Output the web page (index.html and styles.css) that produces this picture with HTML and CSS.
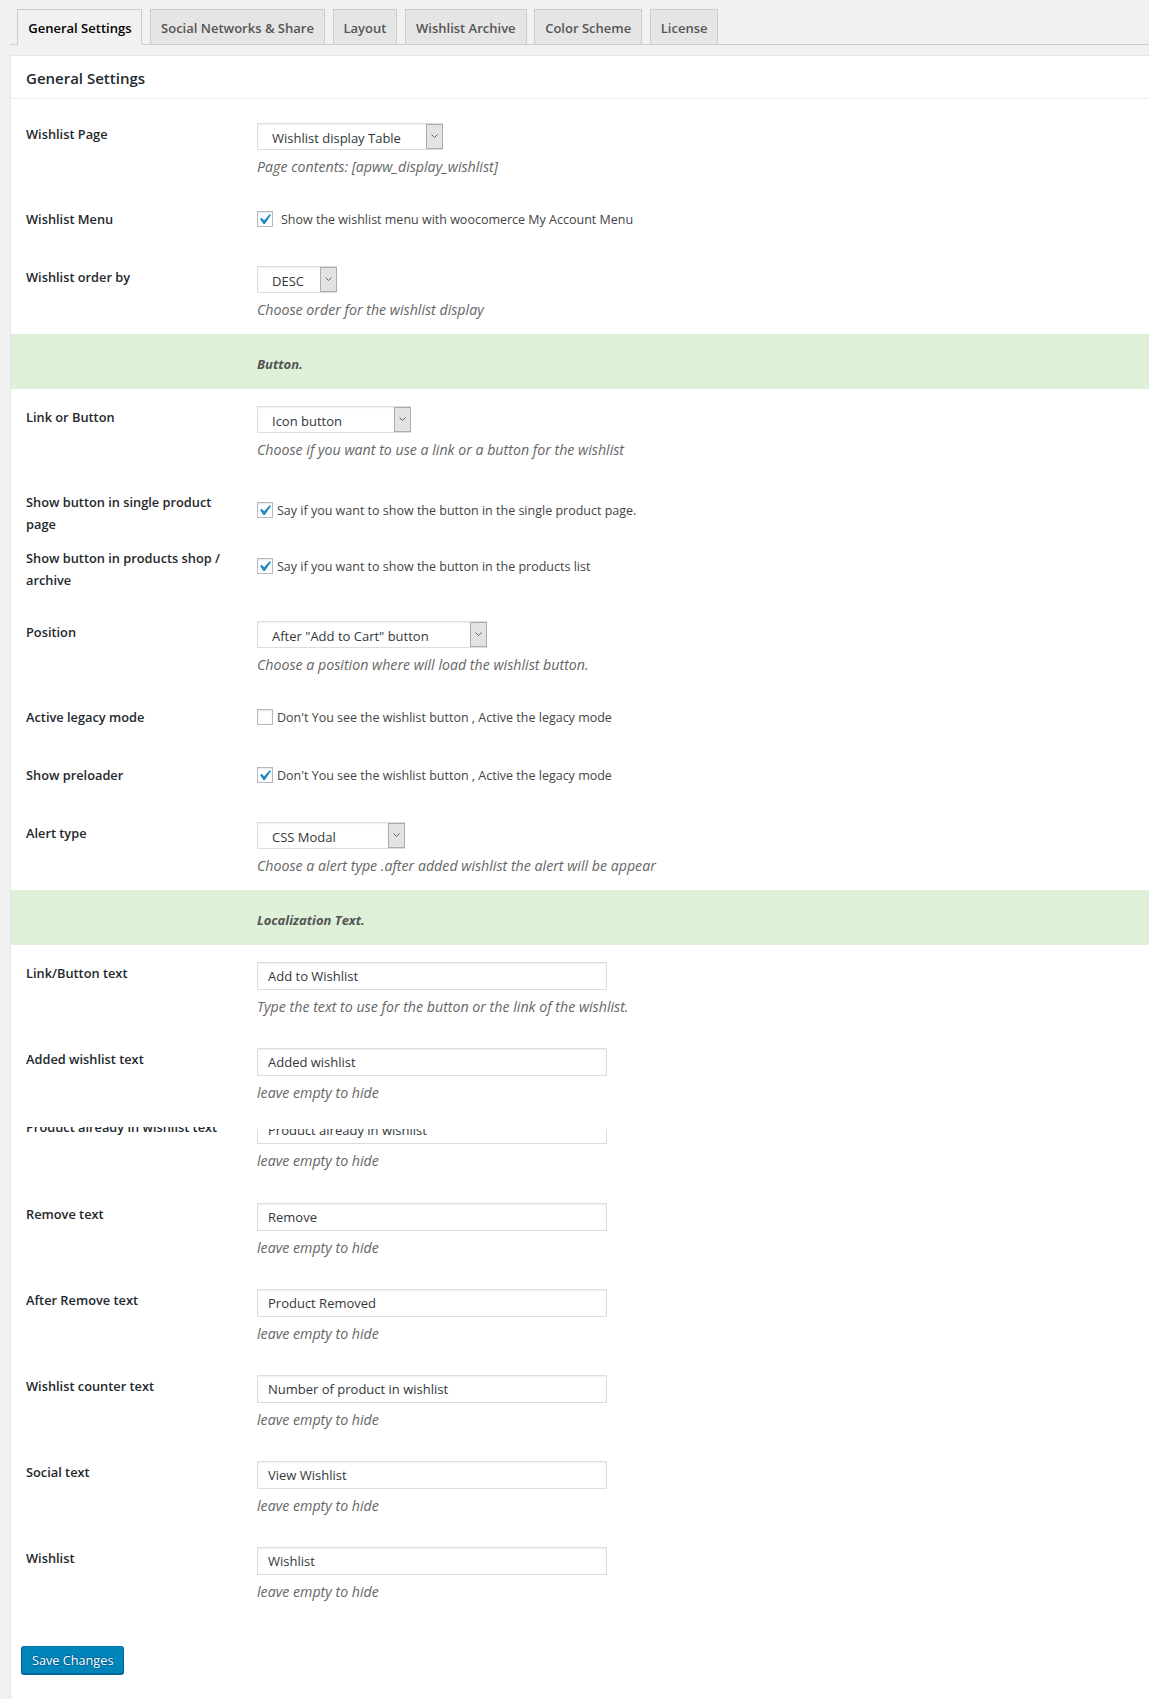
FILE: index.html
```html
<!DOCTYPE html>
<html lang="en">
<head>
<meta charset="utf-8">
<title>General Settings</title>
<link rel="stylesheet" href="styles.css">
</head>
<body>
<div class="wrap">
  <nav class="tabs">
    <a class="tab tab-active">General Settings</a>
    <a class="tab">Social Networks &amp; Share</a>
    <a class="tab">Layout</a>
    <a class="tab">Wishlist Archive</a>
    <a class="tab">Color Scheme</a>
    <a class="tab">License</a>
  </nav>

  <div class="panel">
    <h2 class="panel-title">General Settings</h2>

    <div class="form">
      <div class="row">
        <div class="row-label">Wishlist Page</div>
        <div class="row-field">
          <div class="select w-table"><span class="select-value">Wishlist display Table</span><span class="select-arrow"><svg width="7" height="4" viewBox="0 0 7 4"><polyline points="0.5,0.5 3.5,3.5 6.5,0.5" fill="none" stroke="#606060" stroke-width="1"/></svg></span></div>
          <p class="desc">Page contents: [apww_display_wishlist]</p>
        </div>
      </div>

      <div class="row row-check">
        <div class="row-label">Wishlist Menu</div>
        <div class="row-field">
          <div class="check"><span class="cb"><svg class="tick" width="21" height="21" viewBox="0 0 20 20"><path d="M14.83 4.89l1.34.94-5.81 8.38H9.02L5.78 9.67l1.34-1.25 2.57 2.4z" fill="#1e8cbe"/></svg></span><span class="check-text spaced">Show the wishlist menu with woocomerce My Account Menu</span></div>
        </div>
      </div>

      <div class="row">
        <div class="row-label">Wishlist order by</div>
        <div class="row-field">
          <div class="select w-desc"><span class="select-value">DESC</span><span class="select-arrow"><svg width="7" height="4" viewBox="0 0 7 4"><polyline points="0.5,0.5 3.5,3.5 6.5,0.5" fill="none" stroke="#606060" stroke-width="1"/></svg></span></div>
          <p class="desc">Choose order for the wishlist display</p>
        </div>
      </div>

      <div class="band">
        <div></div>
        <div class="band-text">Button.</div>
      </div>

      <div class="row">
        <div class="row-label">Link or Button</div>
        <div class="row-field">
          <div class="select w-icon"><span class="select-value">Icon button</span><span class="select-arrow"><svg width="7" height="4" viewBox="0 0 7 4"><polyline points="0.5,0.5 3.5,3.5 6.5,0.5" fill="none" stroke="#606060" stroke-width="1"/></svg></span></div>
          <p class="desc">Choose if you want to use a link or a button for the wishlist</p>
        </div>
      </div>

      <div class="row row-check2 h-56">
        <div class="row-label">Show button in single product page</div>
        <div class="row-field">
          <div class="check"><span class="cb"><svg class="tick" width="21" height="21" viewBox="0 0 20 20"><path d="M14.83 4.89l1.34.94-5.81 8.38H9.02L5.78 9.67l1.34-1.25 2.57 2.4z" fill="#1e8cbe"/></svg></span><span class="check-text">Say if you want to show the button in the single product page.</span></div>
        </div>
      </div>

      <div class="row row-check2 h-74">
        <div class="row-label">Show button in products shop / archive</div>
        <div class="row-field">
          <div class="check"><span class="cb"><svg class="tick" width="21" height="21" viewBox="0 0 20 20"><path d="M14.83 4.89l1.34.94-5.81 8.38H9.02L5.78 9.67l1.34-1.25 2.57 2.4z" fill="#1e8cbe"/></svg></span><span class="check-text">Say if you want to show the button in the products list</span></div>
        </div>
      </div>

      <div class="row">
        <div class="row-label">Position</div>
        <div class="row-field">
          <div class="select w-after"><span class="select-value">After "Add to Cart" button</span><span class="select-arrow"><svg width="7" height="4" viewBox="0 0 7 4"><polyline points="0.5,0.5 3.5,3.5 6.5,0.5" fill="none" stroke="#606060" stroke-width="1"/></svg></span></div>
          <p class="desc">Choose a position where will load the wishlist button.</p>
        </div>
      </div>

      <div class="row row-check">
        <div class="row-label">Active legacy mode</div>
        <div class="row-field">
          <div class="check"><span class="cb"></span><span class="check-text">Don't You see the wishlist button , Active the legacy mode</span></div>
        </div>
      </div>

      <div class="row row-check">
        <div class="row-label">Show preloader</div>
        <div class="row-field">
          <div class="check"><span class="cb"><svg class="tick" width="21" height="21" viewBox="0 0 20 20"><path d="M14.83 4.89l1.34.94-5.81 8.38H9.02L5.78 9.67l1.34-1.25 2.57 2.4z" fill="#1e8cbe"/></svg></span><span class="check-text">Don't You see the wishlist button , Active the legacy mode</span></div>
        </div>
      </div>

      <div class="row">
        <div class="row-label">Alert type</div>
        <div class="row-field">
          <div class="select w-css"><span class="select-value">CSS Modal</span><span class="select-arrow"><svg width="7" height="4" viewBox="0 0 7 4"><polyline points="0.5,0.5 3.5,3.5 6.5,0.5" fill="none" stroke="#606060" stroke-width="1"/></svg></span></div>
          <p class="desc">Choose a alert type .after added wishlist the alert will be appear</p>
        </div>
      </div>

      <div class="band">
        <div></div>
        <div class="band-text">Localization Text.</div>
      </div>

      <div class="row row-input">
        <div class="row-label">Link/Button text</div>
        <div class="row-field">
          <div class="text-input">Add to Wishlist</div>
          <p class="desc">Type the text to use for the button or the link of the wishlist.</p>
        </div>
      </div>

      <div class="row row-input">
        <div class="row-label">Added wishlist text</div>
        <div class="row-field">
          <div class="text-input">Added wishlist</div>
          <p class="desc">leave empty to hide</p>
        </div>
      </div>

      <div class="row-clip">
        <div class="row row-input">
          <div class="row-label">Product already in wishlist text</div>
          <div class="row-field">
            <div class="text-input">Product already in wishlist</div>
            <p class="desc">leave empty to hide</p>
          </div>
        </div>
      </div>

      <div class="row row-input">
        <div class="row-label">Remove text</div>
        <div class="row-field">
          <div class="text-input">Remove</div>
          <p class="desc">leave empty to hide</p>
        </div>
      </div>

      <div class="row row-input">
        <div class="row-label">After Remove text</div>
        <div class="row-field">
          <div class="text-input">Product Removed</div>
          <p class="desc">leave empty to hide</p>
        </div>
      </div>

      <div class="row row-input">
        <div class="row-label">Wishlist counter text</div>
        <div class="row-field">
          <div class="text-input">Number of product in wishlist</div>
          <p class="desc">leave empty to hide</p>
        </div>
      </div>

      <div class="row row-input">
        <div class="row-label">Social text</div>
        <div class="row-field">
          <div class="text-input">View Wishlist</div>
          <p class="desc">leave empty to hide</p>
        </div>
      </div>

      <div class="row row-input">
        <div class="row-label">Wishlist</div>
        <div class="row-field">
          <div class="text-input">Wishlist</div>
          <p class="desc">leave empty to hide</p>
        </div>
      </div>
    </div>

    <div class="submit">
      <button class="btn-primary" type="button">Save Changes</button>
    </div>
  </div>
</div>
</body>
</html>
```

FILE: styles.css
```css
html, body {
  margin: 0;
  padding: 0;
}

body {
  background: #f1f1f1;
  font-family: "Open Sans", "Noto Sans", "DejaVu Sans", sans-serif;
  font-size: 13px;
  color: #444;
}

.wrap {
  padding: 9px 0 0 10px;
}

/* Tabs */
.tabs {
  display: flex;
  align-items: flex-end;
  gap: 7.6px;
  padding-left: 7.3px;
  border-bottom: 1px solid #ccc;
}

.tab {
  display: block;
  padding: 6px 10px 4px;
  border: 1px solid #ccc;
  border-bottom: none;
  background: #e5e5e5;
  color: #555;
  font-weight: 600;
  font-size: 13px;
  line-height: 24px;
  white-space: nowrap;
  text-decoration: none;
}

.tab-active {
  background: #f1f1f1;
  color: #000;
  border-bottom: 1px solid #f1f1f1;
  margin-bottom: -1px;
}

/* Panel */
.panel {
  margin-top: 10px;
  background: #fff;
  border-top: 1px solid #e5e5e5;
  border-left: 1px solid #e5e5e5;
  min-height: calc(100vh - 55px);
  box-sizing: border-box;
}

.panel-title {
  margin: 0;
  padding: 11px 15px 9px;
  font-size: 15px;
  font-weight: 600;
  line-height: 22px;
  color: #23282d;
  border-bottom: 1px solid #eee;
}

.form {
  margin-top: 7px;
}

/* Rows */
.row {
  display: grid;
  grid-template-columns: 231px 1fr;
  padding-left: 15px;
}

.row-label {
  width: 200px;
  padding-top: 17px;
  line-height: 22px;
  font-size: 12.8px;
  font-weight: 600;
  color: #23282d;
}

.row-field {
  padding: 17px 0 13px;
}

.row-input .row-field {
  padding-bottom: 13px;
}

.row-check .row-field {
  padding: 20px 0 22px;
}

.row-check2 .row-field {
  padding: 28px 0 0;
}

.h-56 {
  height: 56px;
}

.h-74 {
  height: 74px;
}

.row-clip {
  margin-top: 10px;
  height: 59px;
  overflow: hidden;
}

.row-clip .row {
  margin-top: -28px;
}

.row-clip .row-field {
  clip-path: inset(30px 0 0 0);
}

/* Band */
.band {
  display: grid;
  grid-template-columns: 246px 1fr;
  height: 55px;
  background: #dff0d8;
}

.band-text {
  padding-top: 19px;
  line-height: 22px;
  font-weight: 700;
  font-style: italic;
  color: #555;
}

/* Select */
.select {
  display: flex;
  height: 27px;
  box-sizing: border-box;
  border: 1px solid #ddd;
  border-right: none;
  background: #fff;
  box-shadow: inset 0 1px 2px rgba(0, 0, 0, 0.07);
  color: #32373c;
}

.select-value {
  flex: 1;
  padding-left: 14px;
  padding-top: 4px;
  line-height: 21px;
  white-space: nowrap;
}

.select-arrow {
  width: 17px;
  box-sizing: border-box;
  border: 1px solid #acacac;
  background: #e3e3e3;
  display: flex;
  align-items: center;
  justify-content: center;
}

.select-arrow svg {
  display: block;
  margin-bottom: 2px;
}

.w-table { width: 186px; }
.w-desc { width: 80px; }
.w-icon { width: 154px; }
.w-after { width: 230px; }
.w-css { width: 148px; }

/* Text input */
.text-input {
  width: 350px;
  height: 28px;
  box-sizing: border-box;
  border: 1px solid #ddd;
  box-shadow: inset 0 1px 2px rgba(0, 0, 0, 0.07);
  padding: 0 10px;
  line-height: 27px;
  color: #32373c;
  background: #fff;
  white-space: nowrap;
}

.desc {
  margin: 6px 0 0;
  line-height: 22px;
  font-size: 14.2px;
  font-style: italic;
  color: #666;
  white-space: nowrap;
}

/* Checkbox */
.check {
  display: flex;
  align-items: center;
  height: 16px;
}

.cb {
  display: block;
  flex: none;
  width: 16px;
  height: 16px;
  box-sizing: border-box;
  border: 1px solid #b4b9be;
  background: #fff;
  box-shadow: inset 0 1px 2px rgba(0, 0, 0, 0.1);
  overflow: visible;
}

.tick {
  display: block;
  margin: -3px 0 0 -4px;
}

.check-text {
  margin-left: 4px;
  font-size: 12.5px;
  color: #444;
  white-space: nowrap;
}

.check-text.spaced {
  margin-left: 8px;
}

/* Submit */
.submit {
  padding: 30px 0 0 10px;
}

.btn-primary {
  display: block;
  height: 28px;
  padding: 0 10px 1px;
  font-family: "Open Sans", "Noto Sans", sans-serif;
  font-size: 12.7px;
  line-height: 26px;
  color: #fff;
  background: #0085ba;
  border: 1px solid #0073aa;
  border-color: #0073aa #006799 #006799;
  border-radius: 3px;
  box-shadow: 0 1px 0 #006799;
  text-shadow: 0 -1px 1px #006799, 1px 0 1px #006799, 0 1px 1px #006799, -1px 0 1px #006799;
  cursor: pointer;
}
```
